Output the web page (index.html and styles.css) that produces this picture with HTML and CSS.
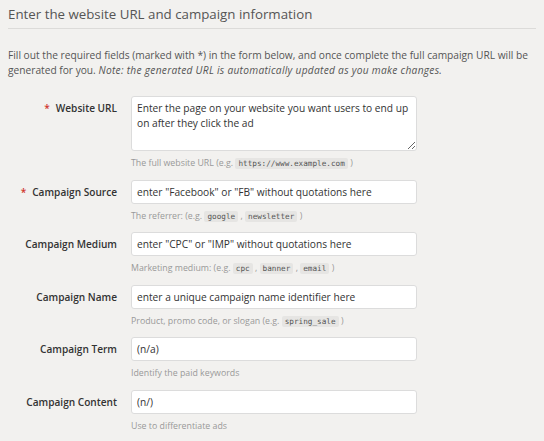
FILE: index.html
```html
<!DOCTYPE html>
<html>
<head>
<meta charset="utf-8">
<link rel="stylesheet" href="styles.css">
</head>
<body>
<h2 class="title">Enter the website URL and campaign information</h2>
<p class="intro">Fill out the required fields (marked with *) in the form below, and once complete the full campaign URL will be generated for you. <em class="note">Note: the generated URL is automatically updated as you make changes.</em></p>
<form class="form">
  <div class="row">
    <label class="label"><span class="req">*</span>Website URL</label>
    <div class="field">
      <textarea class="input area">Enter the page on your website you want users to end up on after they click the ad</textarea>
      <div class="help">The full website URL (e.g. <code>https://www.example.com</code> )</div>
    </div>
  </div>
  <div class="row">
    <label class="label"><span class="req">*</span>Campaign Source</label>
    <div class="field">
      <input class="input" type="text" value='enter "Facebook" or "FB" without quotations here'>
      <div class="help">The referrer: (e.g. <code>google</code> , <code>newsletter</code> )</div>
    </div>
  </div>
  <div class="row">
    <label class="label">Campaign Medium</label>
    <div class="field">
      <input class="input" type="text" value='enter "CPC" or "IMP" without quotations here'>
      <div class="help">Marketing medium: (e.g. <code>cpc</code> , <code>banner</code> , <code>email</code> )</div>
    </div>
  </div>
  <div class="row">
    <label class="label">Campaign Name</label>
    <div class="field">
      <input class="input" type="text" value="enter a unique campaign name identifier here">
      <div class="help">Product, promo code, or slogan (e.g. <code>spring_sale</code> )</div>
    </div>
  </div>
  <div class="row">
    <label class="label">Campaign Term</label>
    <div class="field">
      <input class="input" type="text" value="(n/a)">
      <div class="help">Identify the paid keywords</div>
    </div>
  </div>
  <div class="row">
    <label class="label">Campaign Content</label>
    <div class="field">
      <input class="input" type="text" value="(n/)">
      <div class="help">Use to differentiate ads</div>
    </div>
  </div>
</form>
</body>
</html>
```
FILE: styles.css
```css
html, body {
  margin: 0;
  padding: 0;
  background: #f2f1ef;
}
body {
  padding: 0 8px;
  font-family: "Open Sans", "Liberation Sans", sans-serif;
  color: #555;
}
.title {
  margin: 0;
  padding: 5px 0 5px;
  font-size: 13.3px;
  font-weight: 400;
  line-height: 18px;
  color: #555;
  border-bottom: 1px solid #dcdbd9;
}
.intro {
  margin: 19px 0 18px;
  font-size: 10.2px;
  line-height: 15px;
  color: #555;
}
.note {
  letter-spacing: 0.28px;
}
.form {
  display: flex;
  flex-direction: column;
}
.row {
  display: grid;
  grid-template-columns: 109px 286px;
  column-gap: 14px;
  margin-bottom: 9.5px;
}
.label {
  text-align: right;
  font-size: 10.1px;
  font-weight: 600;
  color: #333;
  line-height: 24px;
}
.req {
  color: #d0342c;
  margin-right: 6px;
}
.field {
  display: flex;
  flex-direction: column;
}
.input {
  box-sizing: border-box;
  width: 286px;
  height: 24px;
  margin: 0;
  padding: 3px 5px;
  border: 1px solid #dcdcdc;
  border-radius: 3px;
  background: #fff;
  font-family: "Open Sans", "Liberation Sans", sans-serif;
  font-size: 10.2px;
  line-height: 15px;
  color: #333;
  outline: none;
}
.area {
  height: 55px;
  padding-top: 4px;
  resize: vertical;
  display: block;
}
.help {
  margin-top: 5px;
  height: 14px;
  font-size: 8.8px;
  line-height: 14px;
  color: #999;
}
code {
  font-family: "DejaVu Sans Mono", "Liberation Mono", monospace;
  font-size: 7.7px;
  line-height: 10px;
  color: #555;
  background: #e6e5e3;
  border-radius: 2px;
  padding: 1px 3px;
}
```
